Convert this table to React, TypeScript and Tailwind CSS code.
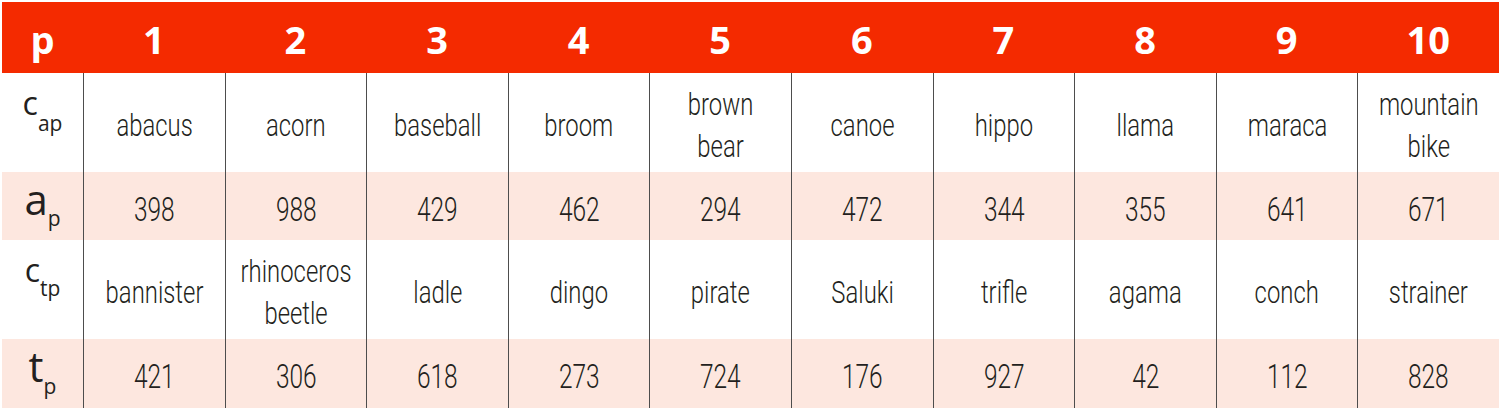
import React from 'react';

type Label = { main: string; sub: string; mainSize: string; subAlign: string; pad: string };

const cols = ['1', '2', '3', '4', '5', '6', '7', '8', '9', '10'];

const cap = [['abacus'], ['acorn'], ['baseball'], ['broom'], ['brown', 'bear'], ['canoe'], ['hippo'], ['llama'], ['maraca'], ['mountain', 'bike']];
const ap = ['398', '988', '429', '462', '294', '472', '344', '355', '641', '671'];
const ctp = [['bannister'], ['rhinoceros', 'beetle'], ['ladle'], ['dingo'], ['pirate'], ['Saluki'], ['trifle'], ['agama'], ['conch'], ['strainer']];
const tp = ['421', '306', '618', '273', '724', '176', '927', '42', '112', '828'];

const RowLabel: React.FC<{ label: Label }> = ({ label }) => (
  <div className={`text-center leading-none font-['Open_Sans',sans-serif] text-[#231f20] ${label.pad}`}>
    <span className={label.mainSize}>{label.main}</span>
    <span className={`text-[21px] ${label.subAlign}`}>{label.sub}</span>
  </div>
);

const WordCell: React.FC<{ lines: string[] }> = ({ lines }) => (
  <div className="border-l border-[#4d4d4d] flex items-center justify-center pt-[7px]">
    <span className="inline-block scale-x-[0.77] text-center whitespace-nowrap text-[31px] leading-[42px] font-[350] font-['Roboto',sans-serif] text-[#231f20]">
      {lines.map((l, i) => (
        <React.Fragment key={i}>
          {i > 0 && <br />}
          {l}
        </React.Fragment>
      ))}
    </span>
  </div>
);

const NumCell: React.FC<{ value: string }> = ({ value }) => (
  <div className="border-l border-[#4d4d4d] flex items-center justify-center pt-[5px]">
    <span className="inline-block scale-x-[0.72] text-[34px] leading-[42px] font-[350] font-['Roboto',sans-serif] text-[#231f20]">
      {value}
    </span>
  </div>
);

export default function App() {
  return (
    <div className="w-[1501px] h-[411px] bg-white p-[2px]">
      {/* header */}
      <div className="grid grid-cols-[81px_repeat(10,minmax(0,1fr))] h-[71px] bg-[#f42a00] text-white font-['Open_Sans',sans-serif] font-bold text-[38px] leading-none">
        <div className="flex items-center justify-center pt-[3px]">p</div>
        {cols.map((c) => (
          <div key={c} className="flex items-center justify-center pt-[3px]">
            {c}
          </div>
        ))}
      </div>

      <div className="grid grid-cols-[81px_repeat(10,minmax(0,1fr))] h-[99px] bg-white">
        <RowLabel label={{ main: 'c', sub: 'ap', mainSize: 'text-[32px]', subAlign: 'align-[-16px]', pad: 'pt-[14px]' }} />
        {cap.map((w, i) => (
          <WordCell key={i} lines={w} />
        ))}
      </div>

      <div className="grid grid-cols-[81px_repeat(10,minmax(0,1fr))] h-[68px] bg-[#fde7df]">
        <RowLabel label={{ main: 'a', sub: 'p', mainSize: 'text-[42px]', subAlign: 'align-[-11px]', pad: 'pt-[6px]' }} />
        {ap.map((v, i) => (
          <NumCell key={i} value={v} />
        ))}
      </div>

      <div className="grid grid-cols-[81px_repeat(10,minmax(0,1fr))] h-[99px] bg-white">
        <RowLabel label={{ main: 'c', sub: 'tp', mainSize: 'text-[32px]', subAlign: 'align-[-14px]', pad: 'pt-[14px]' }} />
        {ctp.map((w, i) => (
          <WordCell key={i} lines={w} />
        ))}
      </div>

      <div className="grid grid-cols-[81px_repeat(10,minmax(0,1fr))] h-[69px] bg-[#fde7df]">
        <RowLabel label={{ main: 't', sub: 'p', mainSize: 'text-[42px]', subAlign: 'align-[-12px]', pad: 'pt-[6px]' }} />
        {tp.map((v, i) => (
          <NumCell key={i} value={v} />
        ))}
      </div>
    </div>
  );
}
